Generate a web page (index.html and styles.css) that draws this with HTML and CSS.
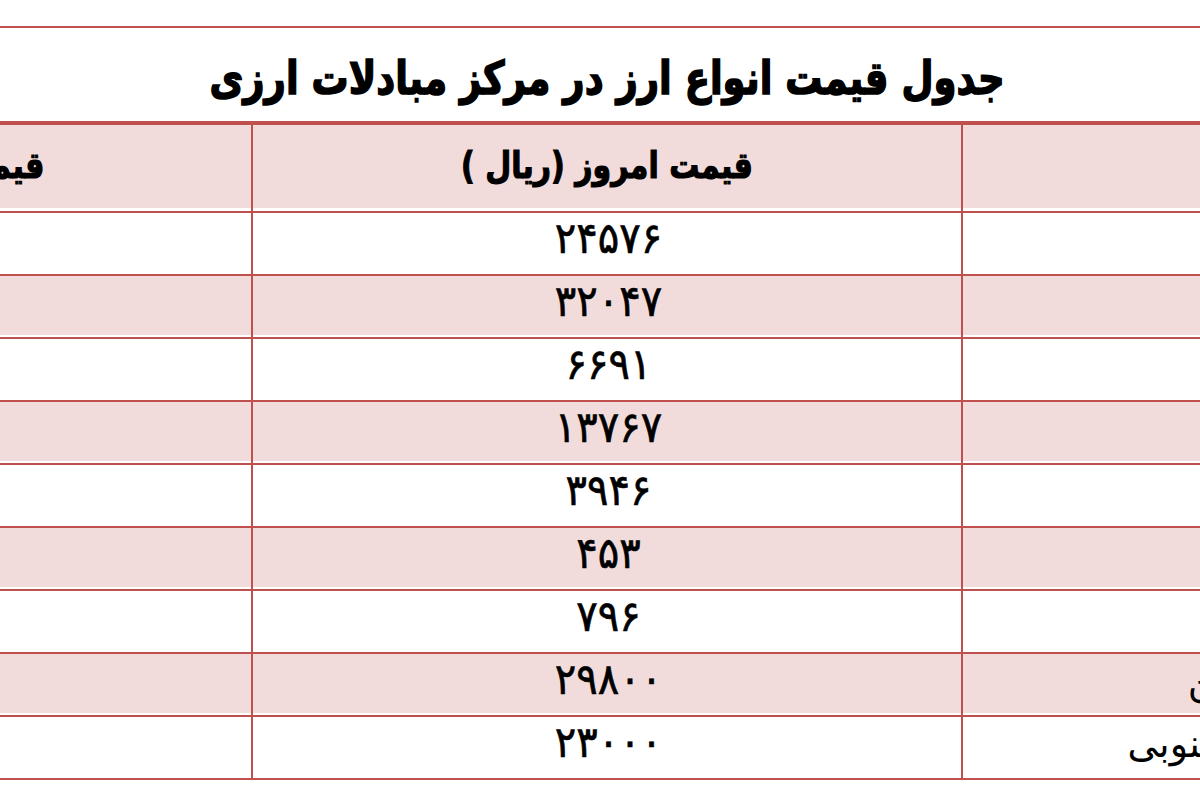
FILE: index.html
```html
<!DOCTYPE html>
<html lang="fa">
<head>
<meta charset="utf-8">
<title>جدول قیمت انواع ارز</title>
<link rel="stylesheet" href="styles.css">
</head>
<body>
<div class="page">
  <div class="sheet">
    <div class="title-row"><span class="title">جدول قیمت انواع ارز در مرکز مبادلات ارزی</span></div>
    <div class="grid">
      <div class="cell name head"></div>
      <div class="cell price head"><span class="head-text">قیمت امروز (ریال )</span></div>
      <div class="cell prev head"><span class="head-text">قیمت روز گذشته (ریال )</span></div>

      <div class="cell name">دلار</div>
      <div class="cell price"><span class="num">۲۴۵۷۶</span></div>
      <div class="cell prev"></div>

      <div class="cell name pink">یورو</div>
      <div class="cell price pink"><span class="num">۳۲۰۴۷</span></div>
      <div class="cell prev pink"></div>

      <div class="cell name">درهم</div>
      <div class="cell price"><span class="num">۶۶۹۱</span></div>
      <div class="cell prev"></div>

      <div class="cell name pink">لیر</div>
      <div class="cell price pink"><span class="num">۱۳۷۶۷</span></div>
      <div class="cell prev pink"></div>

      <div class="cell name">یوان</div>
      <div class="cell price"><span class="num">۳۹۴۶</span></div>
      <div class="cell prev"></div>

      <div class="cell name pink">روپیه</div>
      <div class="cell price pink"><span class="num">۴۵۳</span></div>
      <div class="cell prev pink"></div>

      <div class="cell name">روبل</div>
      <div class="cell price"><span class="num">۷۹۶</span></div>
      <div class="cell prev"></div>

      <div class="cell name name-inset pink">۱۰۰ ین ژاپن</div>
      <div class="cell price pink"><span class="num">۲۹۸۰۰</span></div>
      <div class="cell prev pink"></div>

      <div class="cell name">وون کره جنوبی</div>
      <div class="cell price"><span class="num">۲۳۰۰۰</span></div>
      <div class="cell prev"></div>
    </div>
  </div>
</div>
</body>
</html>
```

FILE: styles.css
```css
html, body {
  margin: 0;
  padding: 0;
  background: #ffffff;
}

.page {
  width: 1200px;
  height: 800px;
  overflow: hidden;
  background: #ffffff;
  font-family: "DejaVu Sans", sans-serif;
  color: #000000;
}

.sheet {
  direction: rtl;
  width: 1842px;
  margin-left: -461px;
  margin-top: 26px;
  border-top: 2px solid #c0504d;
}

.title-row {
  box-sizing: border-box;
  height: 97px;
  border-bottom: 4px solid #c0504d;
  display: flex;
  align-items: center;
  justify-content: center;
  padding-left: 294px;
}

.title {
  display: inline-block;
  font-size: 37px;
  font-weight: bold;
  line-height: 1;
  padding-top: 6px;
  -webkit-text-stroke: 1.3px #000000;
  transform: scaleY(1.24);
}

.grid {
  display: grid;
  grid-template-columns: 420px 710px 712px;
  grid-auto-rows: 63px;
  grid-template-rows: 88px;
}

.cell {
  box-sizing: border-box;
  border-bottom: 2px solid #c0504d;
  display: flex;
  align-items: center;
}

.head {
  background: #f2dcdb;
  box-shadow: inset 0 -3px 0 #ffffff;
}

.pink {
  background: #f2dcdb;
  box-shadow: inset 0 -2px 0 #ffffff;
}

.name {
  border-left: 2px solid #c0504d;
  justify-content: flex-start;
  padding-right: 9px;
  font-size: 38px;
  padding-bottom: 8px;
}

.name-inset {
  padding-right: 0;
}

.price {
  border-left: 2px solid #c0504d;
  justify-content: center;
}

.prev {
  justify-content: center;
}

.prev .head-text {
  margin-right: 68px;
}

.head-text {
  display: inline-block;
  font-size: 30px;
  font-weight: bold;
  padding-bottom: 6px;
  -webkit-text-stroke: 1px #000000;
  transform: scaleY(1.22);
}

.num {
  display: inline-block;
  direction: ltr;
  font-size: 40px;
  letter-spacing: 18px;
  padding-left: 3px;
  padding-bottom: 12px;
  -webkit-text-stroke: 0.6px #000000;
  transform: scaleY(1.08);
}
```
